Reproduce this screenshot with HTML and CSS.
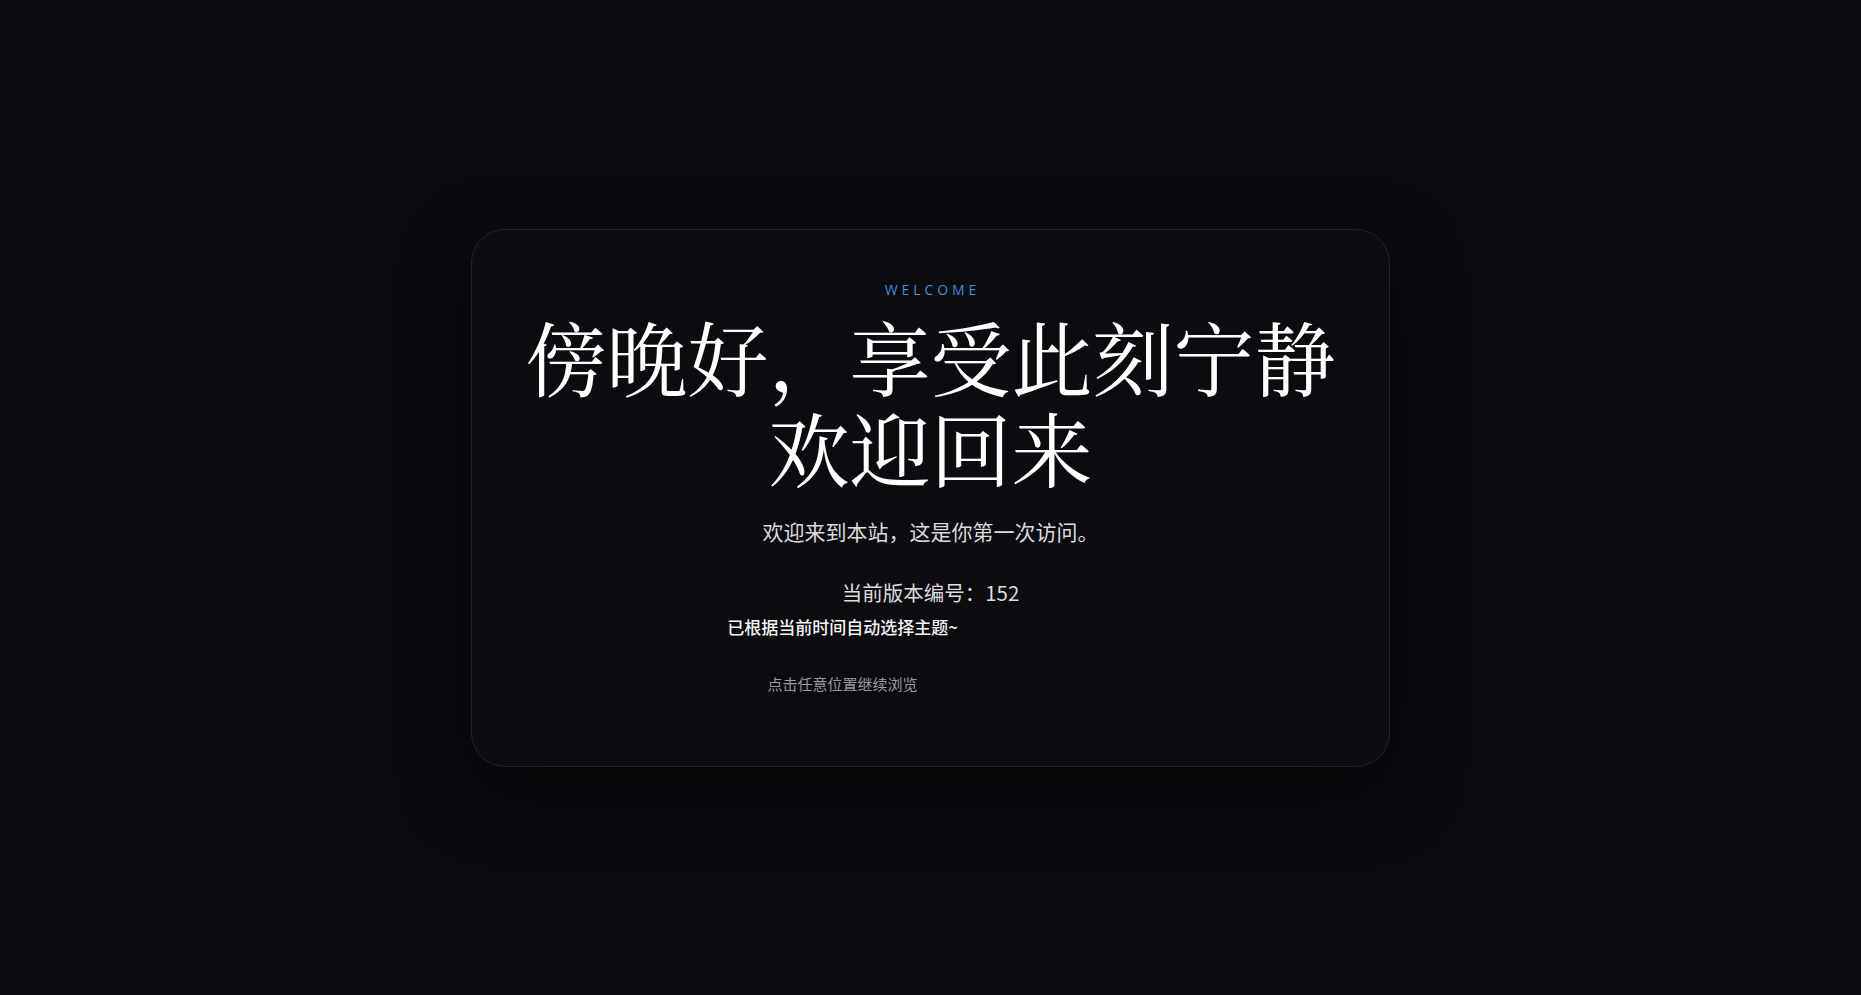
FILE: index.html
```html
<!DOCTYPE html>
<html lang="zh-CN">
<head>
<meta charset="utf-8">
<title>欢迎</title>
<link rel="stylesheet" href="styles.css">
</head>
<body>
<main class="stage">
  <section class="card">
    <div class="eyebrow">WELCOME</div>
    <h1 class="headline"><span class="line">傍晚好，享受此刻宁静</span><span class="line">欢迎回来</span></h1>
    <p class="subtitle">欢迎来到本站，这是你第一次访问。</p>
    <p class="version">当前版本编号：152</p>
    <div class="notes">
      <p class="theme">已根据当前时间自动选择主题~</p>
      <p class="hint">点击任意位置继续浏览</p>
    </div>
  </section>
</main>
</body>
</html>
```

FILE: styles.css
```css
html, body {
  margin: 0;
  padding: 0;
  height: 100%;
  background: #0a0a0f;
}
body {
  font-family: "Noto Sans CJK SC", "Noto Sans", sans-serif;
  color: #e6e6e6;
}
.stage {
  height: 100vh;
  display: flex;
  align-items: center;
  justify-content: center;
}
.card {
  box-sizing: border-box;
  width: 919px;
  padding: 50px 40px 71px;
  background: #0b0b10;
  border: 1px solid #22222a;
  border-radius: 34px;
  box-shadow: 0 24px 70px rgba(0, 0, 0, 0.55);
  text-align: center;
}
.eyebrow {
  font-family: "Open Sans", "Liberation Sans", sans-serif;
  font-size: 14px;
  line-height: 20px;
  letter-spacing: 0.28em;
  color: #3d8fd8;
  padding-left: 0.28em;
}
.headline {
  margin: 10px 0 0;
  font-family: "Noto Serif CJK SC", "Noto Sans CJK SC", serif;
  font-weight: 400;
  font-size: 81px;
  line-height: 91px;
  color: #ffffff;
}
.line {
  display: block;
}
.subtitle {
  margin: 24px 0 0;
  font-size: 21px;
  line-height: 30px;
  color: #dcdcdc;
}
.version {
  margin: 31px 0 0;
  font-size: 20.5px;
  line-height: 30px;
  color: #dcdcdc;
}
.notes {
  padding-right: 176px;
}
.theme {
  margin: 8px 0 0;
  font-size: 17px;
  line-height: 24px;
  font-weight: 500;
  color: #f4f4f4;
}
.hint {
  margin: 34px 0 0;
  font-size: 15px;
  line-height: 22px;
  color: #9a9a9e;
}
```
